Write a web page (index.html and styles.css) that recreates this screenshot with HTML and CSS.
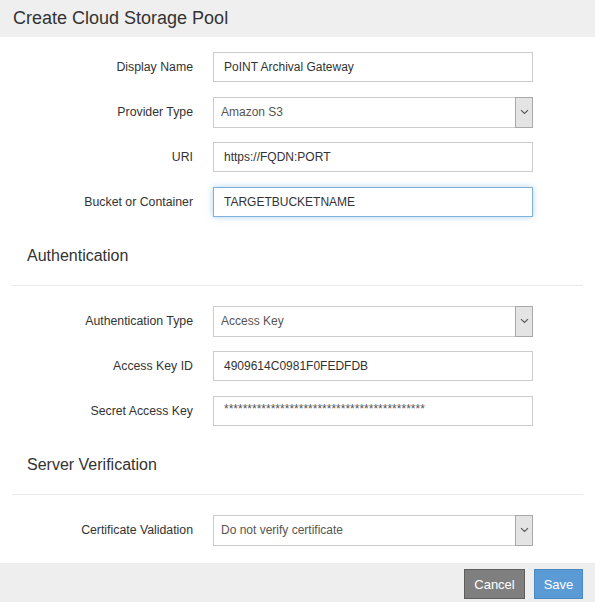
FILE: index.html
```html
<!DOCTYPE html>
<html>
<head>
<meta charset="utf-8">
<link rel="stylesheet" href="styles.css">
</head>
<body>
<div class="dialog">
  <div class="header"><h1 class="title">Create Cloud Storage Pool</h1></div>
  <div class="content">
    <div class="row">
      <label class="label">Display Name</label>
      <input class="field" type="text" value="PoINT Archival Gateway">
    </div>
    <div class="row">
      <label class="label">Provider Type</label>
      <div class="select"><span class="select-text">Amazon S3</span><span class="arrow"><svg width="9" height="6" viewBox="0 0 9 6"><path d="M1 1.2 L4.5 4.5 L8 1.2" fill="none" stroke="#555" stroke-width="1.1"/></svg></span></div>
    </div>
    <div class="row">
      <label class="label">URI</label>
      <input class="field" type="text" value="https://FQDN:PORT">
    </div>
    <div class="row">
      <label class="label">Bucket or Container</label>
      <input class="field focused" type="text" value="TARGETBUCKETNAME">
    </div>

    <h2 class="section">Authentication</h2>
    <div class="row">
      <label class="label">Authentication Type</label>
      <div class="select"><span class="select-text">Access Key</span><span class="arrow"><svg width="9" height="6" viewBox="0 0 9 6"><path d="M1 1.2 L4.5 4.5 L8 1.2" fill="none" stroke="#555" stroke-width="1.1"/></svg></span></div>
    </div>
    <div class="row">
      <label class="label">Access Key ID</label>
      <input class="field" type="text" value="4909614C0981F0FEDFDB">
    </div>
    <div class="row">
      <label class="label">Secret Access Key</label>
      <input class="field secret" type="text" value="*******************************************">
    </div>

    <h2 class="section">Server Verification</h2>
    <div class="row last">
      <label class="label">Certificate Validation</label>
      <div class="select"><span class="select-text">Do not verify certificate</span><span class="arrow"><svg width="9" height="6" viewBox="0 0 9 6"><path d="M1 1.2 L4.5 4.5 L8 1.2" fill="none" stroke="#555" stroke-width="1.1"/></svg></span></div>
    </div>
  </div>
  <div class="footer">
    <button class="btn cancel">Cancel</button>
    <button class="btn save">Save</button>
  </div>
</div>
</body>
</html>
```

FILE: styles.css
```css
html, body {
  margin: 0;
  padding: 0;
  background: #fff;
  font-family: "Liberation Sans", Arial, sans-serif;
  color: #333;
}
.dialog {
  width: 595px;
  height: 602px;
  display: flex;
  flex-direction: column;
}
.header {
  height: 37px;
  background: #efefef;
  padding-left: 13px;
  display: flex;
  align-items: center;
}
.title {
  margin: 0;
  font-size: 18px;
  font-weight: normal;
  color: #333;
  line-height: 20px;
  padding-bottom: 1px;
}
.content {
  padding: 15px 12px 0 12px;
  flex: 1;
}
.row {
  display: flex;
  align-items: center;
  height: 30px;
  margin-bottom: 15px;
}
.row.last {
  margin-bottom: 0;
}
.label {
  width: 181px;
  padding-right: 20px;
  text-align: right;
  font-size: 12.3px;
  color: #333;
  flex-shrink: 0;
}
.field {
  box-sizing: border-box;
  width: 320px;
  height: 30px;
  border: 1px solid #ccc;
  padding: 0 10px;
  font-family: "Liberation Sans", Arial, sans-serif;
  font-size: 12px;
  color: #333;
  outline: none;
  margin: 0;
}
.field.focused {
  border-color: #7fb2dd;
  box-shadow: 0 0 6px rgba(102, 175, 233, 0.55);
}
.field.secret {
  font-size: 12px;
  color: #555;
  padding-bottom: 4px;
}
.select {
  box-sizing: border-box;
  width: 320px;
  height: 31px;
  border: 1px solid #ccc;
  display: flex;
  align-items: center;
  justify-content: space-between;
  padding-left: 7px;
  font-size: 12px;
  color: #555;
}
.arrow {
  box-sizing: border-box;
  width: 18px;
  height: 31px;
  margin-right: -1px;
  background: #e4e4e4;
  border: 1px solid #a9a9a9;
  display: flex;
  align-items: center;
  justify-content: center;
}
.section {
  margin: 15px 0 20px 0;
  padding: 14px 15px 19px 15px;
  font-size: 16px;
  font-weight: normal;
  line-height: 20px;
  color: #333;
  border-bottom: 1px solid #e9e9e9;
}
.footer {
  height: 39px;
  background: #eee;
  display: flex;
  justify-content: flex-end;
  align-items: flex-start;
  padding: 6px 12px 0 0;
  box-sizing: border-box;
  gap: 9px;
}
.btn {
  height: 30px;
  font-family: "Liberation Sans", Arial, sans-serif;
  font-size: 13px;
  color: #fff;
  padding: 0;
  border: 1px solid;
  margin: 0;
  cursor: pointer;
}
.cancel {
  width: 61px;
  background: #7f7f7f;
  border-color: #5e5e5e;
}
.save {
  width: 49px;
  background: #5b9bd5;
  border-color: #4a88c2;
}
```
